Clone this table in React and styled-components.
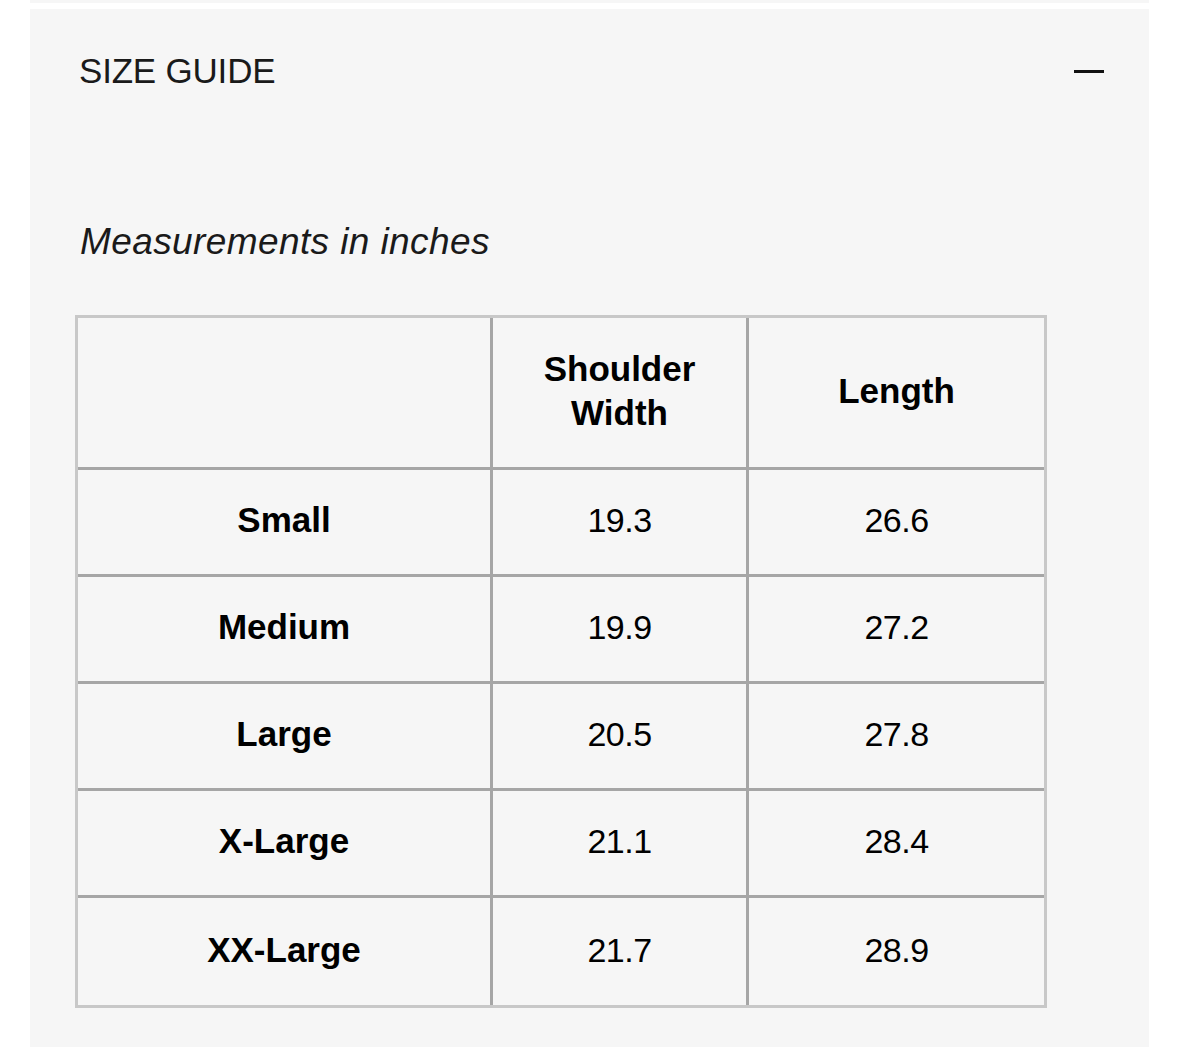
import React from "react"
import styled, { createGlobalStyle } from "styled-components"

const GlobalStyle = createGlobalStyle`
  html, body {
    margin: 0;
    padding: 0;
    background: #ffffff;
  }
  body {
    font-family: "Liberation Sans", Arial, sans-serif;
    color: #111111;
  }
`

const sizes = [
  { name: "Small", shoulder: "19.3", length: "26.6" },
  { name: "Medium", shoulder: "19.9", length: "27.2" },
  { name: "Large", shoulder: "20.5", length: "27.8" },
  { name: "X-Large", shoulder: "21.1", length: "28.4" },
  { name: "XX-Large", shoulder: "21.7", length: "28.9" },
]

const App = () => (
  <>
    <GlobalStyle />
    <Page>
      <PrevPanel />
      <Panel>
        <Header>
          <Title>SIZE GUIDE</Title>
          <Minus aria-label="collapse" />
        </Header>
        <Note>Measurements in inches</Note>
        <Table>
          <thead>
            <tr>
              <HeadCell />
              <HeadCell>
                Shoulder
                <br />
                Width
              </HeadCell>
              <HeadCell>Length</HeadCell>
            </tr>
          </thead>
          <tbody>
            {sizes.map(s => (
              <tr key={s.name}>
                <Cell bold>{s.name}</Cell>
                <Cell>{s.shoulder}</Cell>
                <Cell>{s.length}</Cell>
              </tr>
            ))}
          </tbody>
        </Table>
      </Panel>
    </Page>
  </>
)

export default App

const Page = styled.div`
  width: 1179px;
  height: 1047px;
  overflow: hidden;
  display: flex;
  flex-direction: column;
  padding: 0 30px;
  box-sizing: border-box;
`

const PrevPanel = styled.div`
  height: 3px;
  background: #f6f6f6;
  margin-bottom: 6px;
`

const Panel = styled.section`
  flex: 1;
  background: #f6f6f6;
  padding: 42px 45px 0 49px;
`

const Header = styled.div`
  display: flex;
  align-items: center;
  justify-content: space-between;
  height: 40px;
`

const Title = styled.h2`
  margin: 0;
  font-size: 35px;
  line-height: 40px;
  font-weight: 400;
  color: #1a1a1a;
  letter-spacing: -0.2px;
`

const Minus = styled.span`
  display: block;
  width: 30px;
  height: 3px;
  background: #111111;
`

const Note = styled.p`
  margin: 131px 0 0 1px;
  font-size: 37px;
  line-height: 40px;
  font-style: italic;
  color: #1a1a1a;
  letter-spacing: 0.4px;
`

const Table = styled.table`
  margin: 53px 0 0 -4px;
  width: 972px;
  border: 3px solid #c8c8c8;
  border-collapse: separate;
  border-spacing: 0;
  table-layout: fixed;

  th, td {
    box-sizing: border-box;
  }
  th:nth-child(1), td:nth-child(1) { width: 415px; }
  th:nth-child(2), td:nth-child(2) { width: 256px; }
  th:last-child, td:last-child { border-right: none; }
  tbody tr:last-child td { border-bottom: none; }
`

const HeadCell = styled.th`
  height: 152px;
  padding: 0 8px 3px;
  border-right: 3px solid #a6a6a6;
  border-bottom: 3px solid #a6a6a6;
  font-size: 35px;
  line-height: 44px;
  font-weight: 700;
  color: #000000;
  text-align: center;
  vertical-align: middle;
`

const Cell = styled.td`
  height: 107px;
  padding: 0 8px 4px;
  border-right: 3px solid #a6a6a6;
  border-bottom: 3px solid #a6a6a6;
  font-size: ${props => (props.bold ? "35px" : "34px")};
  font-weight: ${props => (props.bold ? 700 : 400)};
  line-height: 40px;
  color: #000000;
  text-align: center;
  vertical-align: middle;
  letter-spacing: ${props => (props.bold ? "0" : "-0.5px")};
`
